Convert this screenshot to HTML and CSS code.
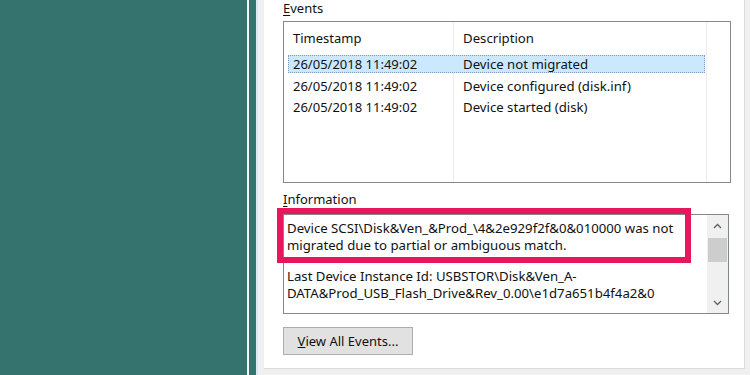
FILE: index.html
```html
<!DOCTYPE html>
<html lang="en">
<head>
    <meta charset="UTF-8">
    <title>Device Properties - Events</title>
    <link rel="stylesheet" href="styles.css">
</head>
<body>
    <div class="screen">
        <div class="desktop"></div>
        <div class="edge"></div>
        <div class="strip"></div>
        <div class="dialog">
            <div class="page">
                <div class="label"><u>E</u>vents</div>
                <div class="list">
                    <div class="row head"><span class="c1">Timestamp</span><span class="c2">Description</span></div>
                    <div class="row sel"><span class="c1">26/05/2018 11:49:02</span><span class="c2">Device not migrated</span></div>
                    <div class="row"><span class="c1">26/05/2018 11:49:02</span><span class="c2">Device configured (disk.inf)</span></div>
                    <div class="row"><span class="c1">26/05/2018 11:49:02</span><span class="c2">Device started (disk)</span></div>
                </div>

                <div class="label info-label"><u>I</u>nformation</div>
                <div class="info">
                    <div class="info-text">
                        <p>Device SCSI\Disk&amp;Ven_&amp;Prod_\4&amp;2e929f2f&amp;0&amp;010000 was not migrated due to partial or ambiguous match.</p>
                        <p>Last Device Instance Id: USBSTOR\Disk&amp;Ven_A-DATA&amp;Prod_USB_Flash_Drive&amp;Rev_0.00\e1d7a651b4f4a2&amp;0</p>
                    </div>
                    <div class="scroll">
                        <div class="arrow">
                            <svg width="9" height="6" viewBox="0 0 9 6"><path d="M1 5 L4.5 1.5 L8 5" fill="none" stroke="#606060" stroke-width="1.3"/></svg>
                        </div>
                        <div class="thumb"></div>
                        <div class="track"></div>
                        <div class="arrow">
                            <svg width="9" height="6" viewBox="0 0 9 6"><path d="M1 1 L4.5 4.5 L8 1" fill="none" stroke="#606060" stroke-width="1.3"/></svg>
                        </div>
                    </div>
                    <div class="mark"></div>
                </div>

                <button class="btn"><u>V</u>iew All Events...</button>
            </div>
        </div>
    </div>
</body>
</html>
```

FILE: styles.css
```css
html, body { margin: 0; padding: 0; }
body {
    font-family: "Noto Sans", "Open Sans", sans-serif;
    font-size: 13px;
    color: #111;
    background: #f0f0f0;
}

.screen {
    display: flex;
    width: 750px;
    height: 375px;
    overflow: hidden;
}

.desktop { width: 247px; background: #35736e; }
.edge { width: 2px; background: #f4f8f8; }
.strip { width: 7px; background: #35736e; }

.dialog {
    flex: 1;
    display: flex;
    align-items: flex-start;
    background: #f0f0f0;
    border-left: 2px solid #dde9f2;
    padding-left: 6px;
}

.page {
    width: 461px;
    height: 367px;
    padding-top: 1px;
    background: #fff;
    border-right: 1px solid #dadada;
    border-bottom: 1px solid #dadada;
    padding-left: 19px;
    display: flex;
    flex-direction: column;
}

.label {
    height: 15px;
    line-height: 15px;
}
.label u { text-decoration-thickness: 1px; text-underline-offset: 2px; }

.list {
    margin-top: 5px;
    width: 446px;
    height: 160px;
    border: 1px solid #828790;
    display: flex;
    flex-direction: column;
    gap: 3.5px;
    background: linear-gradient(to right, transparent 169px, #ececec 169px, #ececec 170px, transparent 170px, transparent 422px, #ececec 422px, #ececec 423px, transparent 423px);
}

.row {
    display: flex;
    align-items: center;
    height: 18px;
    margin-left: 4px;
    width: 417px;
    box-sizing: border-box;
    border: 1px solid transparent;
}
.row.head { height: 29.5px; padding-top: 2px; }
.row.sel {
    background: #cce8ff;
    border: 1px dotted #7f9cba;
}
.c1 { width: 170px; padding-left: 4px; box-sizing: border-box; }
.c2 { padding-left: 4px; font-size: 13.2px; }

.info-label { margin-top: 9px; }

.info {
    position: relative;
    margin-top: 7px;
    width: 444px;
    height: 98px;
    border: 1px solid #828790;
    display: flex;
}

.info-text {
    flex: 1;
    padding: 5px 0 0 3px;
    line-height: 17px;
    font-size: 13.2px;
}
.info-text p { margin: 0 0 14px 0; }

.scroll {
    width: 21px;
    background: #f0f0f0;
    display: flex;
    flex-direction: column;
}
.arrow {
    height: 21px;
    display: flex;
    align-items: center;
    justify-content: center;
}
.thumb {
    margin: 2px 1px 0 1px;
    height: 24px;
    background: #cdcdcd;
}
.track { flex: 1; }

.mark {
    position: absolute;
    left: -7px;
    top: -7px;
    width: 414px;
    height: 55px;
    box-sizing: border-box;
    border: 6px solid #e8175d;
}

.btn {
    margin-top: 13px;
    width: 130px;
    height: 28px;
    background: #e1e1e1;
    border: 1px solid #adadad;
    font-family: inherit;
    font-size: 13px;
    color: #111;
    padding: 0;
}
```
